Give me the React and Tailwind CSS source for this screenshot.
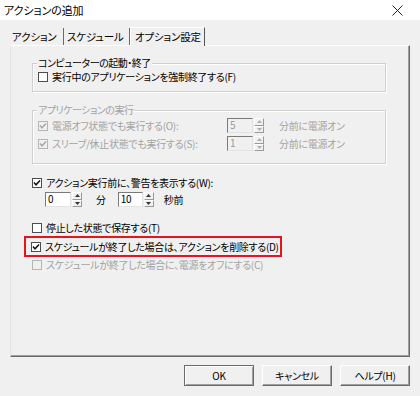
import React from "react";

const Check = ({ checked, disabled }) => (
  <span
    className={
      "inline-flex shrink-0 items-center justify-center w-[10px] h-[10px] border " +
      (disabled ? "border-[#b5b5b5] bg-[#f0f0f0]" : "border-[#4d4d4d] bg-white")
    }
  >
    {checked && (
      <svg width="8" height="8" viewBox="0 0 8 8">
        <path
          d="M1 3.6 L3 5.8 L7 1.4"
          fill="none"
          stroke={disabled ? "#a8a8a8" : "#111"}
          strokeWidth="1.5"
        />
      </svg>
    )}
  </span>
);

const Row = ({ checked, disabled, children, className = "" }) => (
  <div className={"flex items-center h-[14px] " + className}>
    <Check checked={checked} disabled={disabled} />
    <span
      className={
        "ml-[4px] whitespace-nowrap leading-[14px] " +
        (disabled ? "text-[#a3a3a3]" : "text-black")
      }
    >
      {children}
    </span>
  </div>
);

const Spin = ({ value, disabled, w = "w-[26px]" }) => (
  <div className="flex h-[15px]">
    <div
      className={
        w +
        " h-full border border-t-[#7a7a7a] border-l-[#7a7a7a] border-b-[#e3e3e3] border-r-[#e3e3e3] pl-[2px] text-[10px] leading-[12px] " +
        (disabled ? "bg-[#f0f0f0] text-[#9a9a9a]" : "bg-white text-black")
      }
    >
      {value}
    </div>
    <div className="ml-[1px] flex flex-col w-[10px] h-full">
      {[0, 1].map((i) => (
        <div
          key={i}
          className="flex-1 flex items-center justify-center bg-[#f0f0f0] border border-t-white border-l-white border-b-[#9a9a9a] border-r-[#9a9a9a]"
        >
          <svg width="5" height="3" viewBox="0 0 5 3">
            <path
              d={i === 0 ? "M0 3 L2.5 0 L5 3 Z" : "M0 0 L2.5 3 L5 0 Z"}
              fill={disabled ? "#b0b0b0" : "#333"}
            />
          </svg>
        </div>
      ))}
    </div>
  </div>
);

const Group = ({ label, disabled, className = "", children }) => (
  <div
    className={
      "relative border border-[#d0d0d0] shadow-[inset_1px_1px_0_#ffffff,1px_1px_0_#ffffff] " +
      className
    }
  >
    <span
      className={
        "absolute -top-[7px] left-[4px] px-[1px] bg-[#f0f0f0] leading-[12px] whitespace-nowrap tracking-[-0.5px] " +
        (disabled ? "text-[#a3a3a3]" : "text-black")
      }
    >
      {label}
    </span>
    {children}
  </div>
);

const Btn = ({ children, def }) => (
  <div
    className={
      "w-[70px] h-[21px] flex items-center justify-center bg-[#f0f0f0] border " +
      (def
        ? "border-[#6a6a6a] shadow-[inset_1px_1px_0_#ffffff,inset_-1px_-1px_0_#a0a0a0]"
        : "border-t-white border-l-white border-b-[#6a6a6a] border-r-[#6a6a6a] shadow-[inset_-1px_-1px_0_#a0a0a0]")
    }
  >
    {children}
  </div>
);

export default function App() {
  return (
    <div className="w-[420px] h-[396px] bg-[#f0f0f0] flex flex-col text-[10px] tracking-[-0.3px] text-black font-['Noto_Sans_CJK_JP','Noto_Sans',sans-serif] [font-feature-settings:'palt'] overflow-hidden">
      {/* title bar */}
      <div className="h-[20px] bg-white flex items-center justify-between pl-[4px] pr-[17px] shrink-0">
        <span className="text-[11px] leading-[14px] tracking-[-0.1px]">アクションの追加</span>
        <svg width="11" height="11" viewBox="0 0 11 11">
          <path d="M0.5 0.5 L10.5 10.5 M10.5 0.5 L0.5 10.5" stroke="#222" strokeWidth="1" />
        </svg>
      </div>

      {/* tabs */}
      <div className="pl-[10px] pt-[6px] flex items-end h-[25px] shrink-0 text-[10.5px] tracking-[-0.2px]">
        <div className="w-[54px] h-[17px] flex items-center pl-[2px] border-r border-[#6a6a6a] leading-[14px] whitespace-nowrap">
          アクション
        </div>
        <div className="w-[66px] h-[17px] flex items-center pl-[3px] border-r border-[#6a6a6a] leading-[14px] whitespace-nowrap">
          スケジュール
        </div>
        <div className="w-[75px] h-[19px] -mb-[1px] z-10 flex items-center pl-[4px] bg-[#f0f0f0] border-l border-t border-r border-l-white border-t-white border-r-[#555] leading-[14px] whitespace-nowrap">
          オプション設定
        </div>
      </div>

      {/* panel */}
      <div className="ml-[10px] w-[400px] h-[312px] shrink-0 border border-l-[#e4e4e4] border-t-white border-r-[#6a6a6a] border-b-[#6a6a6a] shadow-[inset_-1px_-1px_0_#a0a0a0] flex flex-col pl-[21px]">
        <Group label="コンピューターの起動・終了" className="mt-[17px] w-[354px] h-[29px] pt-[6px] pl-[5px]">
          <Row>実行中のアプリケーションを強制終了する(F)</Row>
        </Group>

        <Group label="アプリケーションの実行" disabled className="mt-[18px] w-[354px] h-[54px] pt-[7px] pl-[5px] flex flex-col gap-[3px]">
          <div className="flex items-center h-[15px]">
            <div className="w-[189px]">
              <Row checked disabled>電源オフ状態でも実行する(O):</Row>
            </div>
            <Spin value="5" disabled />
            <span className="ml-[15px] text-[#a3a3a3] whitespace-nowrap">分前に電源オン</span>
          </div>
          <div className="flex items-center h-[15px]">
            <div className="w-[189px]">
              <Row checked disabled>スリーブ/休止状態でも実行する(S):</Row>
            </div>
            <Spin value="1" disabled />
            <span className="ml-[15px] text-[#a3a3a3] whitespace-nowrap">分前に電源オン</span>
          </div>
        </Group>

        <Row checked className="mt-[12px]">アクション実行前に、警告を表示する(W):</Row>

        <div className="mt-[2px] ml-[13px] flex items-center h-[15px]">
          <Spin value="0" />
          <span className="ml-[14px]">分</span>
          <div className="ml-[12px]">
            <Spin value="10" w="w-[25px]" />
          </div>
          <span className="ml-[10px]">秒前</span>
        </div>

        <Row className="mt-[14px]">停止した状態で保存する(T)</Row>

        <div className="-ml-[8px] mt-[1px] w-[258px] h-[21px] border-2 border-[#e5141f] pl-[5px] flex items-center">
          <Row checked>スケジュールが終了した場合は、アクションを削除する(D)</Row>
        </div>

        <Row disabled className="mt-[1px]">スケジュールが終了した場合に、電源をオフにする(C)</Row>
      </div>

      {/* buttons */}
      <div className="mt-[8px] pr-[10px] flex justify-end gap-[8px]">
        <Btn def>OK</Btn>
        <Btn>キャンセル</Btn>
        <Btn>ヘルプ(H)</Btn>
      </div>
    </div>
  );
}
